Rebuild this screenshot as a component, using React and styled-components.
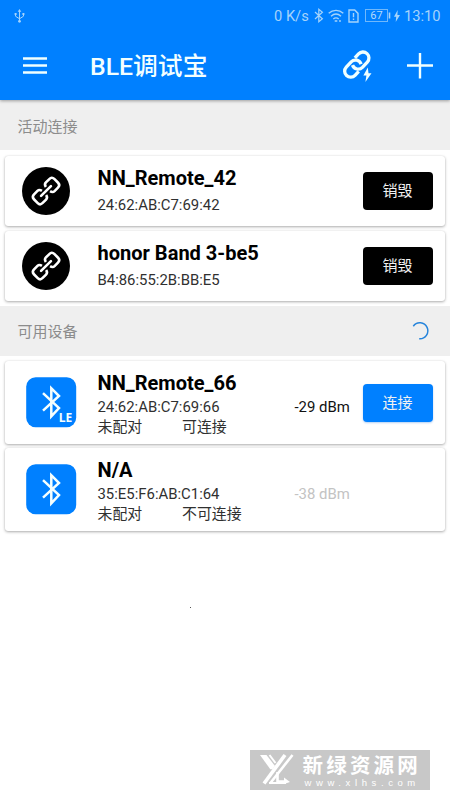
import React from "react";
import styled, { createGlobalStyle } from "styled-components";

const Global = createGlobalStyle`
  * { box-sizing: border-box; }
  body {
    margin: 0;
    background: #fff;
    font-family: Roboto, "Noto Sans CJK SC", sans-serif;
  }
  svg { display: block; flex: none; overflow: visible; }
`;

const Screen = styled.div`
  position: relative;
  width: 450px;
  height: 800px;
  overflow: hidden;
  background: #fff;
`;

const Header = styled.header`
  position: relative;
  height: 100px;
  background: #0080ff;
  box-shadow: 0 1px 3px rgba(0, 0, 0, 0.35);
`;

const StatusBar = styled.div`
  display: flex;
  align-items: center;
  height: 31px;
  padding: 0 10px 0 14px;
  color: #a5d3fb;
  font-size: 15px;
`;

const StatusText = styled.span`
  width: ${(p) => p.$w}px;
  margin-right: ${(p) => p.$gap || 0}px;
  padding-top: 1px;
  font-size: 14.7px;
  line-height: 31px;
  white-space: nowrap;
`;

const StatusIcon = styled.svg`
  margin-right: ${(p) => p.$gap}px;
`;

const Toolbar = styled.div`
  display: flex;
  align-items: center;
  height: 69px;
  padding: 0 17px 0 23px;
`;

const Title = styled.h1`
  flex: 1;
  margin: 0 0 0 43px;
  padding-top: 3px;
  color: #f3ffff;
  font-size: 24.8px;
  font-weight: 500;
  line-height: 36px;
`;

const AddIcon = styled.svg`
  margin-left: 34px;
`;

const SectionBar = styled.div`
  display: flex;
  align-items: center;
  justify-content: space-between;
  height: 50px;
  padding: 0 21px 0 17.5px;
  background: #efefef;
  color: #8c8c8c;
  font-size: 15px;
`;

const CardList = styled.div`
  display: flex;
  flex-direction: column;
  gap: ${(p) => p.$gap}px;
  padding: ${(p) => p.$pad};
`;

const Card = styled.article`
  display: flex;
  height: ${(p) => p.$h}px;
  padding-right: 12.5px;
  align-items: center;
  border-radius: 3px;
  background: #fff;
  box-shadow: 0 1px 3px rgba(0, 0, 0, 0.32), 0 0 1px rgba(0, 0, 0, 0.12);
`;

const IconSlot = styled.div`
  display: flex;
  width: 92.5px;
  padding-left: ${(p) => p.$left}px;
`;

const Info = styled.div`
  flex: 1;
  align-self: stretch;
  padding-top: ${(p) => p.$top}px;
  color: #303030;
  font-size: 14.9px;
  white-space: nowrap;
`;

const Name = styled.div`
  color: #000;
  font-size: 20.05px;
  font-weight: 700;
  line-height: 24px;
`;

const Address = styled.div`
  margin-top: ${(p) => p.$gap}px;
  line-height: 20px;
`;

const Flags = styled.div`
  display: grid;
  grid-template-columns: 84.5px 1fr;
  line-height: 20px;
`;

const Signal = styled.span`
  width: 68px;
  padding-top: 9px;
  color: ${(p) => (p.$dim ? "#c3c3c3" : "#111")};
  font-size: 14.9px;
  line-height: 20px;
  white-space: nowrap;
`;

const ActionSpace = styled.div`
  width: 70px;
`;

const Action = styled.button`
  width: 70px;
  height: 38px;
  margin-top: ${(p) => (p.$primary ? 1 : 0)}px;
  padding: 0;
  border: 0;
  border-radius: 4px;
  background: ${(p) => (p.$primary ? "#0080ff" : "#000")};
  color: #f2f2f2;
  font: 15px/38px Roboto, "Noto Sans CJK SC", sans-serif;
  box-shadow: ${(p) => (p.$primary ? "0 1px 2px rgba(0,100,220,.3)" : "none")};
`;

const Speck = styled.i`
  position: absolute;
  left: 190px;
  top: 607px;
  width: 1px;
  height: 1px;
  background: #555;
`;

const Watermark = styled.aside`
  position: absolute;
  left: 250px;
  top: 750px;
  display: flex;
  width: 180px;
  height: 40px;
  padding-left: 10px;
  background: #c8c8c8;
  color: #fff;
`;

const WatermarkText = styled.div`
  display: flex;
  flex-direction: column;
  padding: 2px 0 0 8.5px;
  white-space: nowrap;
`;

const WatermarkName = styled.span`
  font: 700 20.5px/24px "Noto Sans CJK SC", sans-serif;
  letter-spacing: 3.2px;
`;

const WatermarkUrl = styled.span`
  padding: 1px 0 0 2px;
  font: 9.5px/11px "Liberation Sans", sans-serif;
  letter-spacing: 4.6px;
`;

const UsbIcon = () => (
  <svg width="11" height="14" viewBox="0 0 11 14" fill="none" stroke="#a5d3fb">
    <path d="M5.5 2v10M1.5 5v2.2l4 2.6 4-2.6V5" />
    <path d="M5.5 0l1.8 2.8H3.7zM0.6 4h2v2h-2zM8.4 4h2v2h-2z" fill="#a5d3fb" stroke="none" />
    <circle cx="5.5" cy="12.3" r="1.4" fill="#a5d3fb" stroke="none" />
  </svg>
);

const StatusIcons = () => (
  <>
    <StatusIcon $gap={4} width="10" height="15" viewBox="0 0 10 15" fill="none" stroke="#a5d3fb" strokeWidth="1.2">
      <path d="M1 4l7.4 6.8-3.6 3V1.2l3.6 3L1 11" />
    </StatusIcon>
    <StatusIcon $gap={4} width="16" height="14" viewBox="0 0 16 14" fill="none" stroke="#a5d3fb" strokeWidth="1.4">
      <path d="M0.7 4.2c4.2-3.8 10.4-3.8 14.6 0M3 7.2c3-2.6 7-2.6 10 0M5.3 10c1.7-1.4 3.7-1.4 5.4 0" />
      <path d="M6.7 12h2.6M12 11v2" />
    </StatusIcon>
    <StatusIcon $gap={6} width="11" height="14" viewBox="0 0 11 14" fill="none" stroke="#a5d3fb" strokeWidth="1.4">
      <path d="M1 1h5.7L10 4.4V13H1zM5.5 4v4.2M5.5 9.5v1.5" />
    </StatusIcon>
    <StatusIcon $gap={3} width="26" height="13" viewBox="0 0 26 13">
      <rect x=".5" y=".5" width="22" height="12" fill="none" stroke="#70b8fb" />
      <path d="M24.5 3.5v6" stroke="#a5d3fb" strokeWidth="1.6" />
      <text x="11.5" y="10.4" textAnchor="middle" fill="#b3dafb" fontFamily="Roboto" fontSize="11">67</text>
    </StatusIcon>
    <StatusIcon $gap={4} width="6" height="12" viewBox="0 0 6 12" fill="#a5d3fb">
      <path d="M3.7 0L0 6.7h2.2L1.7 12 6 5H3.4z" />
    </StatusIcon>
  </>
);

const FastLink = () => (
  <svg width="30" height="32" viewBox="0 0 30 32">
    <g fill="none" stroke="#f0ffff" strokeWidth="3.3" transform="translate(13.8 14.6) rotate(-47)">
      <path d="M-3.6 6H-9a6 6 0 0 1 0-12H-1.8a6 6 0 0 1 5.1 8.8" />
      <path d="M3.6-6H9a6 6 0 0 1 0 12H1.8a6 6 0 0 1-5.1-8.8" />
    </g>
    <path d="M24.8 17.5l-4.4 8h3l-1 6.5 6.1-8.7h-3z" fill="#f0ffff" />
  </svg>
);

const ChainBadge = () => (
  <svg width="48" height="48" viewBox="0 0 48 48">
    <circle cx="24" cy="24" r="24" />
    <g transform="translate(24 24) rotate(-45)" fill="none" stroke="#fff" strokeWidth="2.6">
      <path d="M-2.8-3C-3.2-5.2-4.2-6.1-6-6.1H-10.8c-2.2 0-3.6 1.1-3.6 3.4v5.4c0 2.3 1.4 3.4 3.6 3.4H-6c1.8 0 2.8-.9 3.2-3.1" />
      <path d="M2.8-3C3.2-5.2 4.2-6.1 6-6.1h4.8c2.2 0 3.6 1.1 3.6 3.4v5.4c0 2.3-1.4 3.4-3.6 3.4H6c-1.8 0-2.8-.9-3.2-3.1" />
      <path d="M-7 0H7" strokeLinecap="round" />
    </g>
  </svg>
);

const BleBadge = ({ le }) => (
  <svg width="51" height="51" viewBox="0 0 51 51">
    <rect x=".2" y=".2" width="50" height="50" rx="9.5" fill="#0080ff" />
    <path d="M17 16.2L33 31l-7.7 8.3V11.2L33 19 17 33.7" fill="none" stroke="#f5ffff" strokeWidth="2.5" />
    {le && <text x="32.8" y="45.4" fill="#f5ffff" fontFamily="Open Sans, sans-serif" fontSize="12" fontWeight="700">LE</text>}
  </svg>
);

const active = [
  { name: "NN_Remote_42", address: "24:62:AB:C7:69:42" },
  { name: "honor Band 3-be5", address: "B4:86:55:2B:BB:E5" },
];

const available = [
  { name: "NN_Remote_66", address: "24:62:AB:C7:69:66", state: "可连接", rssi: "-29 dBm", le: true },
  { name: "N/A", address: "35:E5:F6:AB:C1:64", state: "不可连接", rssi: "-38 dBm", le: false },
];

export default function App() {
  return (
    <Screen>
      <Global />
      <Header>
        <StatusBar>
          <UsbIcon />
          <StatusText $w={249} />
          <StatusText $w={36} $gap={4}>0 K/s</StatusText>
          <StatusIcons />
          <StatusText $w={36}>13:10</StatusText>
        </StatusBar>
        <Toolbar>
          <svg width="24" height="18" viewBox="0 0 24 18" stroke="#f0ffff" strokeWidth="2.5">
            <path d="M0 1.5h24M0 8.5h24M0 15.5h24" />
          </svg>
          <Title>BLE调试宝</Title>
          <FastLink />
          <AddIcon width="26" height="26" viewBox="0 0 26 26" stroke="#f0ffff" strokeWidth="2.4">
            <path d="M0 12.5h26M13 0v25.5" />
          </AddIcon>
        </Toolbar>
      </Header>
      <SectionBar>活动连接</SectionBar>
      <CardList $gap={5} $pad="5.5px 5px 5px">
        {active.map((d) => (
          <Card key={d.name} $h={70}>
            <IconSlot $left={17.3}><ChainBadge /></IconSlot>
            <Info $top={10.6}>
              <Name>{d.name}</Name>
              <Address $gap={4.5}>{d.address}</Address>
            </Info>
            <Action>销毁</Action>
          </Card>
        ))}
      </CardList>
      <SectionBar>
        可用设备
        <svg width="17" height="18" viewBox="0 0 17 18" fill="none" stroke="#2684db" strokeWidth="1.5">
          <path d="M1.3 4.2A8 8 0 1 1 7.2 16.8" />
        </svg>
      </SectionBar>
      <CardList $gap={4} $pad="5px">
        {available.map((d) => (
          <Card key={d.name} $h={83}>
            <IconSlot $left={21}><BleBadge le={d.le} /></IconSlot>
            <Info $top={10}>
              <Name>{d.name}</Name>
              <Address $gap={2}>{d.address}</Address>
              <Flags><span>未配对</span><span>{d.state}</span></Flags>
            </Info>
            <Signal $dim={!d.le}>{d.rssi}</Signal>
            {d.le ? <Action $primary>连接</Action> : <ActionSpace />}
          </Card>
        ))}
      </CardList>
      <Speck />
      <Watermark>
        <svg width="34" height="40" viewBox="0 0 34 40" fill="none" stroke="#fff">
          <path d="M0 5h6.5l8.5 11-2.5 3.2h-2.2z" fill="#fff" stroke="none" />
          <path d="M9.5 5l6 8" strokeWidth="2" />
          <path d="M25 5L4 33.5" strokeWidth="3.6" />
          <path d="M32.5 5L10 33.5" strokeWidth="2.6" />
          <path d="M17.5 22v9.5H26" strokeWidth="2.6" />
          <path d="M9 33h17" strokeWidth="2" />
          <path d="M24 27.5l6 4.5-6 2z" fill="#fff" stroke="none" />
        </svg>
        <WatermarkText>
          <WatermarkName>新绿资源网</WatermarkName>
          <WatermarkUrl>www.xlhs.com</WatermarkUrl>
        </WatermarkText>
      </Watermark>
    </Screen>
  );
}
